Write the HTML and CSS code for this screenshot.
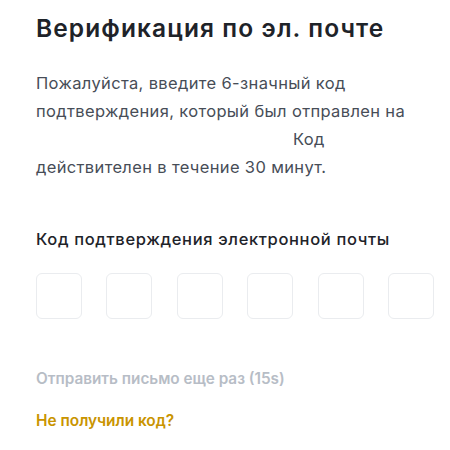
FILE: index.html
```html
<!DOCTYPE html>
<html lang="ru">
<head>
<meta charset="utf-8">
<link rel="stylesheet" href="styles.css">
</head>
<body>
<main class="page">
  <h1 class="title">Верификация по эл. почте</h1>
  <p class="desc">Пожалуйста, введите 6-значный код подтверждения, который был отправлен на <span class="email"></span> Код<br>действителен в течение 30 минут.</p>
  <div class="label">Код подтверждения электронной почты</div>
  <div class="code">
    <div class="cell"></div>
    <div class="cell"></div>
    <div class="cell"></div>
    <div class="cell"></div>
    <div class="cell"></div>
    <div class="cell"></div>
  </div>
  <div class="resend">Отправить письмо еще раз (15s)</div>
  <div class="help">Не получили код?</div>
</main>
</body>
</html>
```

FILE: styles.css
```css
html, body {
  margin: 0;
  padding: 0;
  background: #fff;
}
body {
  font-family: "Inter", "Noto Sans", sans-serif;
  color: #1e2329;
}
.page {
  padding: 12px 16px 0 36px;
}
.title {
  margin: 0;
  font-size: 24.5px;
  line-height: 32px;
  font-weight: 600;
  letter-spacing: 1.1px;
  color: #1e2329;
}
.desc {
  margin: 25px 0 0;
  font-size: 16.5px;
  line-height: 28px;
  letter-spacing: 0.35px;
  color: #474d57;
  width: 398px;
}
.email {
  display: inline-block;
  width: 252px;
}
.label {
  margin-top: 46px;
  font-size: 16.5px;
  line-height: 24px;
  font-weight: 500;
  letter-spacing: 0.65px;
  color: #1e2329;
}
.code {
  margin-top: 22px;
  display: flex;
  justify-content: space-between;
  width: 398px;
}
.cell {
  width: 44px;
  height: 44px;
  border: 1px solid #eaecef;
  border-radius: 6px;
}
.resend {
  margin-top: 50px;
  font-size: 15.3px;
  line-height: 20px;
  font-weight: 600;
  color: #b7bdc6;
}
.help {
  margin-top: 22px;
  font-size: 15.4px;
  line-height: 20px;
  font-weight: 600;
  color: #c99400;
}
```
